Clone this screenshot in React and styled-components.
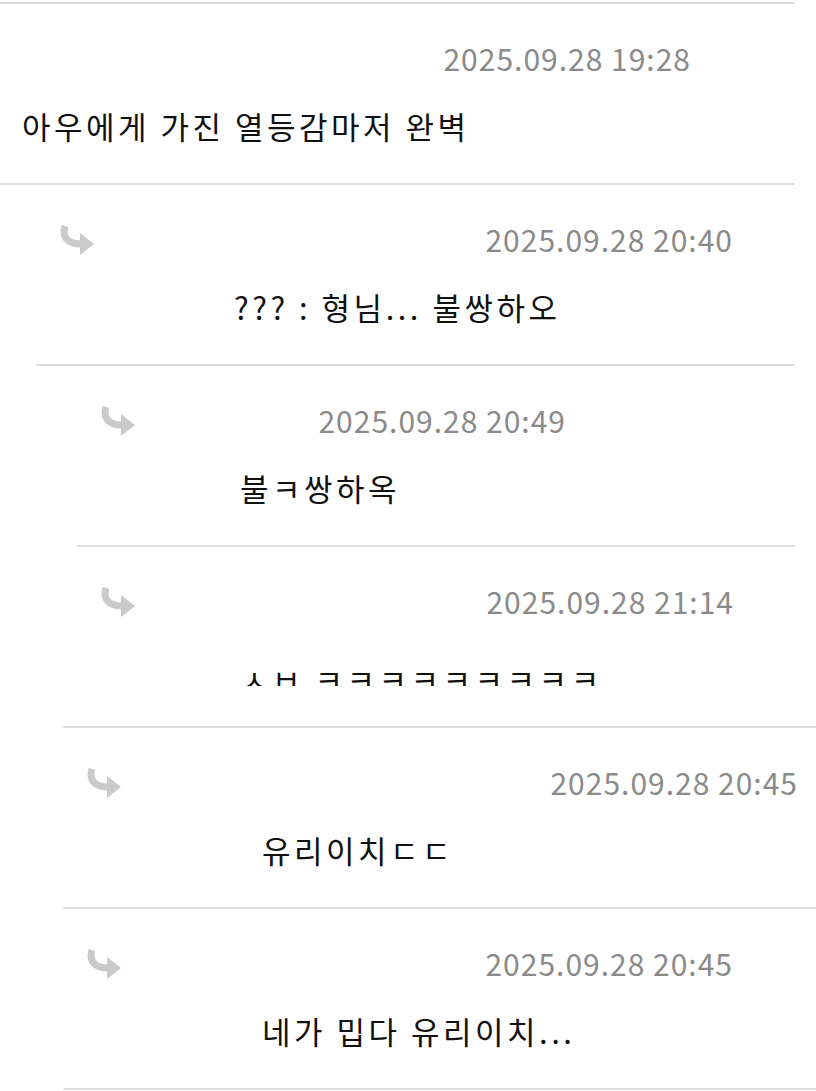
import React from "react";
import styled, { createGlobalStyle } from "styled-components";

const GlobalStyle = createGlobalStyle`
    body {
        margin: 0;
        background: #ffffff;
        font-family: "Noto Sans CJK KR", "Noto Sans", sans-serif;
    }
`;

const comments = [
    { lineLeft: 0, lineRight: 795, date: "2025.09.28 19:28", dateRight: 690, bodyLeft: 22, text: "아우에게 가진 열등감마저 완벽" },
    { lineLeft: 36, lineRight: 795, arrowLeft: 60, date: "2025.09.28 20:40", dateRight: 732, bodyLeft: 234, text: "??? : 형님... 불쌍하오" },
    { lineLeft: 77, lineRight: 795, arrowLeft: 101, date: "2025.09.28 20:49", dateRight: 565, bodyLeft: 240, text: "불ㅋ쌍하옥" },
    { lineLeft: 63, lineRight: 816, arrowLeft: 101, date: "2025.09.28 21:14", dateRight: 733, bodyLeft: 240, text: "ㅅㅂ ㅋㅋㅋㅋㅋㅋㅋㅋㅋ", clipped: true },
    { lineLeft: 63, lineRight: 816, arrowLeft: 87, date: "2025.09.28 20:45", dateRight: 797, bodyLeft: 262, text: "유리이치ㄷㄷ" },
    { lineLeft: 63, lineRight: 816, arrowLeft: 87, date: "2025.09.28 20:45", dateRight: 732, bodyLeft: 262, text: "네가 밉다 유리이치..." },
];

const ReplyArrow = () => (
    <svg width="36" height="32" viewBox="0 0 36 32">
        <path d="M5 2 C2 12, 6 20, 22 20" fill="none" stroke="#cacaca" strokeWidth="7" strokeLinecap="butt" />
        <polygon points="20,9 34,20 20,31" fill="#cacaca" />
    </svg>
);

const Comment = ({ c }) => (
    <Row $left={c.lineLeft} $right={c.lineRight}>
        <Head>
            <ArrowSlot $offset={c.arrowLeft ? c.arrowLeft - c.lineLeft : 0}>
                {c.arrowLeft ? <ReplyArrow /> : null}
            </ArrowSlot>
            <Date $gap={c.lineRight - c.dateRight}>{c.date}</Date>
        </Head>
        <Body $offset={c.bodyLeft - c.lineLeft} $clipped={c.clipped}>
            <span>{c.text}</span>
        </Body>
    </Row>
);

export default function App() {
    return (
        <>
            <GlobalStyle />
            <List>
                <TopRule />
                {comments.map((c, i) => (
                    <Comment key={i} c={c} />
                ))}
            </List>
        </>
    );
}

const List = styled.div`
    width: 816px;
    display: flex;
    flex-direction: column;
`;

const TopRule = styled.div`
    width: 795px;
    margin-top: 2px;
    border-bottom: 2px solid #dedede;
`;

const Row = styled.div`
    margin-left: ${(p) => p.$left}px;
    width: ${(p) => p.$right - p.$left}px;
    height: 179px;
    border-bottom: 2px solid #dedede;
    display: flex;
    flex-direction: column;
`;

const Head = styled.div`
    display: flex;
    align-items: center;
    height: 36px;
    margin-top: 36px;
`;

const ArrowSlot = styled.div`
    margin-left: ${(p) => p.$offset}px;
    width: 36px;
    height: 32px;
    margin-top: 2px;
`;

const Date = styled.div`
    margin-left: auto;
    margin-right: ${(p) => p.$gap - 1}px;
    font-size: 30px;
    line-height: 36px;
    letter-spacing: 1px;
    color: #8a8a8a;
    white-space: nowrap;
`;

const Body = styled.div`
    margin-top: 30px;
    padding-left: ${(p) => p.$offset}px;
    font-size: 31px;
    line-height: 40px;
    letter-spacing: 3.5px;
    color: #111111;
    white-space: nowrap;
    height: ${(p) => (p.$clipped ? "37px" : "auto")};
    overflow: ${(p) => (p.$clipped ? "hidden" : "visible")};

    span {
        display: inline-block;
        transform: ${(p) => (p.$clipped ? "translateY(10px)" : "none")};
    }
`;
